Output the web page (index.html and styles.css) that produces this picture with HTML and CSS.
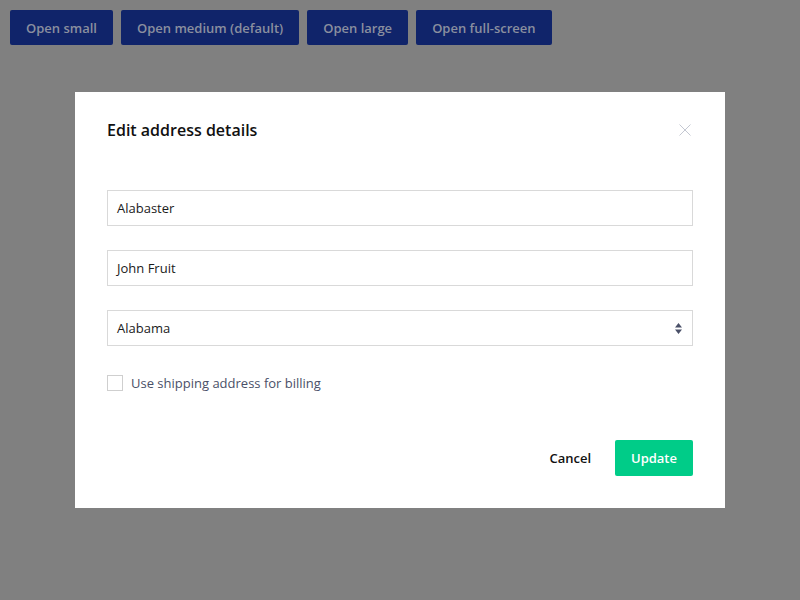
FILE: index.html
```html
<!DOCTYPE html>
<html>
<head>
<meta charset="utf-8">
<link rel="stylesheet" href="styles.css">
</head>
<body>
<div class="toolbar">
  <button class="open-btn">Open small</button>
  <button class="open-btn">Open medium (default)</button>
  <button class="open-btn">Open large</button>
  <button class="open-btn">Open full-screen</button>
</div>
<div class="overlay">
  <div class="modal">
    <div class="modal-header">
      <h2 class="modal-title">Edit address details</h2>
      <svg class="close" width="12" height="12" viewBox="0 0 12 12"><path d="M0.5 0.5 L11.5 11.5 M11.5 0.5 L0.5 11.5" stroke="#c4c8d2" stroke-width="1" fill="none"/></svg>
    </div>
    <div class="fields">
      <div class="field">Alabaster</div>
      <div class="field">John Fruit</div>
      <div class="field select">Alabama
        <svg class="arrows" width="7" height="11" viewBox="0 0 7 11"><path d="M3.5 0 L7 4.5 H0 Z M3.5 11 L7 6.5 H0 Z" fill="#4a5068"/></svg>
      </div>
    </div>
    <label class="check"><span class="box"></span><span class="check-label">Use shipping address for billing</span></label>
    <div class="footer">
      <button class="cancel">Cancel</button>
      <button class="update">Update</button>
    </div>
  </div>
</div>
</body>
</html>
```

FILE: styles.css
```css
html, body {
  margin: 0;
  padding: 0;
  width: 800px;
  height: 600px;
  background: #808080;
  font-family: "Open Sans", sans-serif;
  overflow: hidden;
}
.toolbar {
  display: flex;
  gap: 8px;
  padding: 10px;
}
.open-btn {
  height: 35px;
  padding: 0 16px;
  background: #10246a;
  color: #8a8f9f;
  border: none;
  border-radius: 2px;
  font-family: "Open Sans", sans-serif;
  font-size: 13px;
  font-weight: 600;
}
.overlay {
  display: flex;
  justify-content: center;
  padding-top: 37px;
}
.modal {
  width: 650px;
  box-sizing: border-box;
  background: #fff;
  padding: 26px 32px 32px;
}
.modal-header {
  display: flex;
  justify-content: space-between;
  align-items: center;
  height: 24px;
}
.modal-title {
  margin: 0;
  font-size: 16px;
  font-weight: 600;
  color: #111;
  line-height: 24px;
}
.close {
  margin-right: 2px;
}
.fields {
  display: flex;
  flex-direction: column;
  gap: 24px;
  margin-top: 48px;
}
.field {
  height: 36px;
  box-sizing: border-box;
  border: 1px solid #d9d9d9;
  padding: 0 9px;
  display: flex;
  align-items: center;
  font-size: 13px;
  color: #1a1a1a;
}
.select {
  justify-content: space-between;
  padding-right: 10px;
}
.check {
  display: flex;
  align-items: center;
  gap: 8px;
  margin-top: 28px;
}
.box {
  width: 16px;
  height: 16px;
  box-sizing: border-box;
  border: 1px solid #cfcfcf;
}
.check-label {
  font-size: 13px;
  color: #4a5068;
}
.footer {
  display: flex;
  justify-content: flex-end;
  align-items: center;
  gap: 24px;
  margin-top: 48px;
}
.cancel {
  background: none;
  border: none;
  padding: 0;
  font-family: "Open Sans", sans-serif;
  font-size: 13px;
  font-weight: 600;
  color: #111;
}
.update {
  height: 36px;
  width: 78px;
  background: #00cc88;
  color: #fff;
  border: none;
  border-radius: 2px;
  font-family: "Open Sans", sans-serif;
  font-size: 13px;
  font-weight: 600;
}
```
